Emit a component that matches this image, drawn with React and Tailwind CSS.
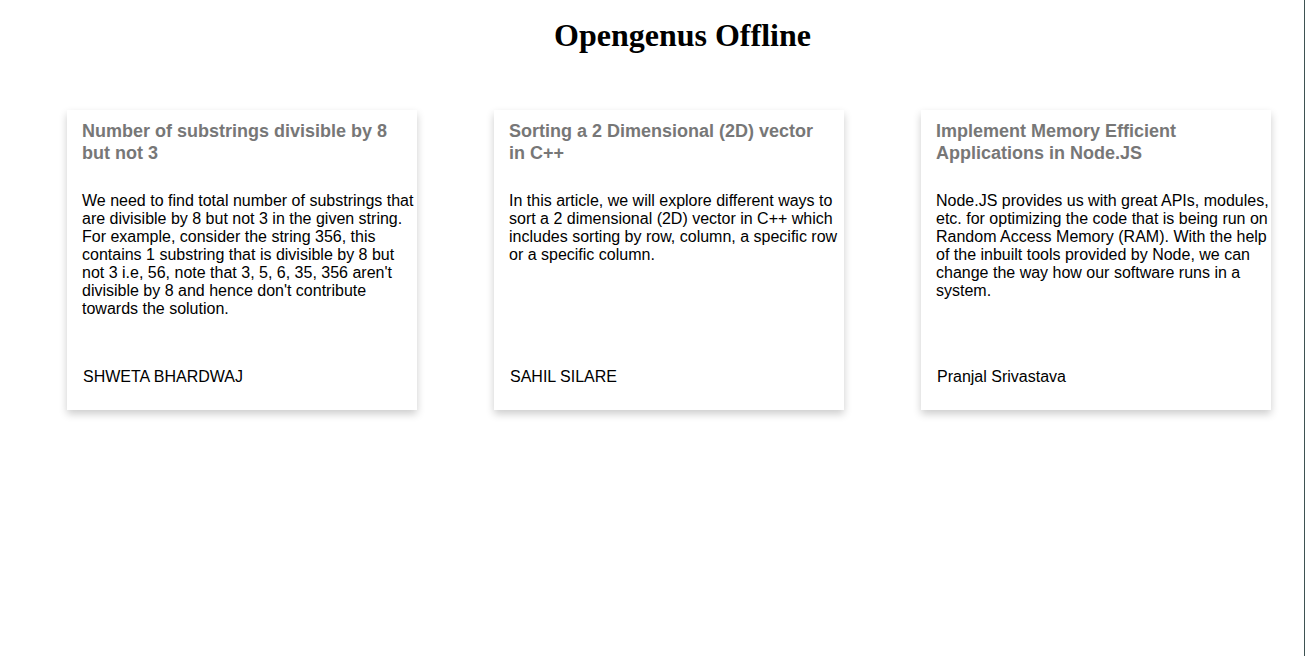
import React from "react";

const posts = [
    {
        title: "Number of substrings divisible by 8 but not 3",
        body: "We need to find total number of substrings that are divisible by 8 but not 3 in the given string. For example, consider the string 356, this contains 1 substring that is divisible by 8 but not 3 i.e, 56, note that 3, 5, 6, 35, 356 aren't divisible by 8 and hence don't contribute towards the solution.",
        author: "SHWETA BHARDWAJ",
    },
    {
        title: "Sorting a 2 Dimensional (2D) vector in C++",
        body: "In this article, we will explore different ways to sort a 2 dimensional (2D) vector in C++ which includes sorting by row, column, a specific row or a specific column.",
        author: "SAHIL SILARE",
    },
    {
        title: "Implement Memory Efficient Applications in Node.JS",
        body: "Node.JS provides us with great APIs, modules, etc. for optimizing the code that is being run on Random Access Memory (RAM). With the help of the inbuilt tools provided by Node, we can change the way how our software runs in a system.",
        author: "Pranjal Srivastava",
    },
];

function Card({ post }) {
    return (
        <div className="flex h-[300px] w-[350px] flex-col bg-white pl-[15px] pr-[2px] pt-[10px] pb-[24px] shadow-[0_4px_8px_0_rgba(0,0,0,0.2)]">
            <h2 className="max-w-[318px] text-[18px] font-bold leading-[22px] text-[#777777]">{post.title}</h2>
            {/* описание */}
            <p className="mt-[28px] flex-1 text-[16px] leading-[18px] text-black">{post.body}</p>
            <div className="ml-px text-[16px] leading-[18px] text-black">{post.author}</div>
        </div>
    );
}

export default function App() {
    return (
        <div className="flex h-[660px] w-full bg-white font-['Liberation_Sans',Arial,sans-serif]">
            <div className="flex-1">
                <h1 className="pl-[61px] pt-[19px] text-center font-['Liberation_Serif','Times_New_Roman',serif] text-[32px] font-bold leading-[32px] text-black">
                    Opengenus Offline
                </h1>
                <div className="mt-[59px] flex gap-[77px] pl-[67px]">
                    {posts.map((p) => (
                        <Card key={p.author} post={p} />
                    ))}
                </div>
            </div>
            <div className="mb-[4px] w-px bg-[#3e5252]" />
        </div>
    );
}
